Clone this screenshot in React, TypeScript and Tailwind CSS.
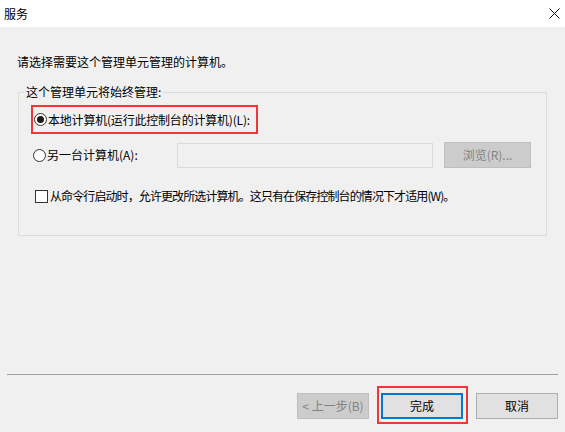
import { useState } from "react";

const font = {
  fontFamily: '"Noto Sans CJK SC", "Noto Sans", "Liberation Sans", sans-serif',
};

const Radio = ({ checked, onClick }: { checked: boolean; onClick: () => void }) => (
  <span
    onClick={onClick}
    className="flex h-[13px] w-[13px] shrink-0 items-center justify-center rounded-full border border-[#333333] bg-white"
  >
    {checked && <span className="h-[7px] w-[7px] rounded-full bg-[#1a1a1a]" />}
  </span>
);

const App = () => {
  const [target, setTarget] = useState("local");
  const [allowChange, setAllowChange] = useState(false);

  return (
    <div
      className="flex h-[432px] w-[565px] flex-col overflow-hidden bg-[#f0f0f0] text-[12px] leading-[16px] text-black"
      style={font}
    >
      {/* title bar */}
      <div className="flex h-[27px] shrink-0 items-center justify-between bg-white pl-[4px] pr-[5px]">
        <span>服务</span>
        <svg width="11" height="11" viewBox="0 0 11 11">
          <path d="M0.5 0.5L10.5 10.5M10.5 0.5L0.5 10.5" stroke="#111" strokeWidth="1" />
        </svg>
      </div>

      <p className="mt-[27px] pl-[17px]">请选择需要这个管理单元管理的计算机。</p>

      {/* group box */}
      <div className="relative ml-[18px] mt-[22px] h-[144px] w-[529px] border border-[#dcdcdc]">
        <span className="absolute left-[5px] top-[-9px] bg-[#f0f0f0] px-[2px]">
          这个管理单元将始终管理:
        </span>

        <div className="ml-[12px] mt-[12px] flex h-[29px] w-[227px] items-center gap-[1px] border-2 border-[#f23538] pl-[1px] tracking-[-0.2px]">
          <Radio checked={target === "local"} onClick={() => setTarget("local")} />
          <span>本地计算机(运行此控制台的计算机)(L):</span>
        </div>

        <div className="mt-[8px] flex items-center">
          <div className="ml-[14px] flex w-[144px] items-center gap-[1px]">
            <Radio checked={target === "other"} onClick={() => setTarget("other")} />
            <span>另一台计算机(A):</span>
          </div>
          <div className="h-[25px] w-[256px] border border-[#dadada] bg-[#f0f0f0]" />
          <button className="ml-[11px] h-[26px] w-[87px] border border-[#bfbfbf] bg-[#cccccc] text-[#838383]">
            浏览(R)...
          </button>
        </div>

        <label className="ml-[16px] mt-[20px] flex items-center gap-[2px]">
          <span
            onClick={() => setAllowChange(!allowChange)}
            className="flex h-[13px] w-[13px] items-center justify-center border border-[#333333] bg-white text-[10px]"
          >
            {allowChange ? "✓" : ""}
          </span>
          <span className="tracking-[-0.9px]">
            从命令行启动时，允许更改所选计算机。这只有在保存控制台的情况下才适用(W)。
          </span>
        </label>
      </div>

      <div className="mx-[7px] mt-[138px] border-t border-[#a0a0a0]" />

      {/* buttons */}
      <div className="mt-[18px] flex items-center pl-[297px]">
        <button className="h-[26px] w-[72px] border border-[#bfbfbf] bg-[#cccccc] text-[#838383]">
          &lt; 上一步(B)
        </button>
        <div className="relative ml-[12px]">
          <button className="h-[26px] w-[82px] border-2 border-[#0078d7] bg-[#e1e1e1]">完成</button>
          <span className="pointer-events-none absolute left-[-4px] top-[-7px] h-[38px] w-[91px] border-2 border-[#f23538]" />
        </div>
        <button className="ml-[13px] h-[26px] w-[82px] border border-[#adadad] bg-[#e1e1e1]">取消</button>
      </div>
    </div>
  );
};

export default App;
